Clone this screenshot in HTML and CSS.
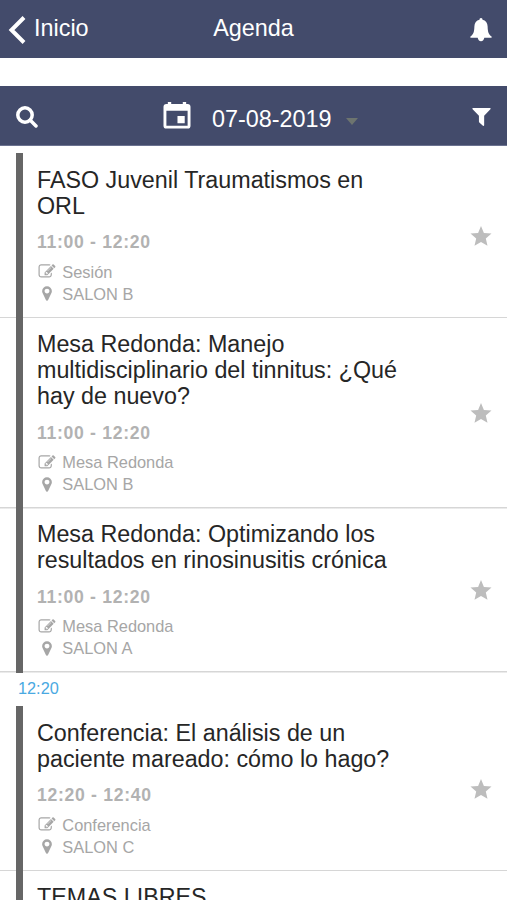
FILE: index.html
```html
<!DOCTYPE html>
<html lang="es">
<head>
  <meta charset="UTF-8" />
  <meta name="viewport" content="width=device-width, initial-scale=1.0" />
  <title>Agenda</title>
  <link rel="stylesheet" href="styles.css">
</head>
<body>
  <!-- shared icons -->
  <svg class="sprite">
    <symbol id="edit" viewBox="0 0 1792 1792"><path d="M888 1184l116-116-152-152-116 116v56h96v96h56zm440-720q-16-16-33 1l-350 350q-17 17-1 33t33-1l350-350q17-17 1-33zm80 594v190q0 119-84.500 203.500t-203.500 84.500h-832q-119 0-203.500-84.500t-84.500-203.500v-832q0-119 84.500-203.500t203.500-84.500h832q63 0 117 25 15 7 18 23 3 17-9 29l-49 49q-14 14-32 8-23-6-45-6h-832q-66 0-113 47t-47 113v832q0 66 47 113t113 47h832q66 0 113-47t47-113v-126q0-13 9-22l64-64q15-15 35-7t20 29zm-96-738l288 288-672 672h-288v-288zm444 132l-92 92-288-288 92-92q28-28 68-28t68 28l152 152q28 28 28 68t-28 68z"/></symbol>
    <symbol id="marker" viewBox="0 0 1792 1792"><path d="M1152 640q0-106-75-181t-181-75-181 75-75 181 75 181 181 75 181-75 75-181zm256 0q0 109-33 179l-364 774q-16 33-47.500 52t-67.500 19-67.500-19-46.500-52l-365-774q-33-70-33-179 0-212 150-362t362-150 362 150 150 362z"/></symbol>
    <symbol id="star" viewBox="0 0 22 22"><path d="M11 1l2.900 6.900 7.600.6-5.700 5 1.700 7.300L11 16.900l-6.500 3.900 1.700-7.300-5.700-5 7.600-.6z"/></symbol>
  </svg>

  <header class="navbar">
    <a class="back">
      <svg class="chevron" viewBox="0 0 18 28"><path d="M16 1.500L3.500 14 16 26.500"/></svg>
      <span>Inicio</span>
    </a>
    <h1>Agenda</h1>
    <svg class="bell" viewBox="0 0 22 24"><path d="M11 0c-1.100 0-1.500.8-1.500 1.800C6.300 2.500 4.500 5 4.400 8.300 4.200 14 3.500 16.200.4 18.600v1.200h7.300c.3 1.900 1.500 3.400 3.300 3.400s3-1.500 3.300-3.400h7.300v-1.200c-3.100-2.400-3.800-4.600-4-10.300-.1-3.300-1.900-5.800-5.100-6.500C12.500.8 12.100 0 11 0z"/></svg>
  </header>

  <div class="toolbar">
    <svg class="search" viewBox="0 0 22 22"><circle cx="9" cy="9" r="7.200"/><path d="M14.300 14.300L20 20"/></svg>
    <div class="date">
      <svg class="calendar" viewBox="0 0 28 28"><path fill-rule="evenodd" d="M4.500 0h3.500v2h12V0h3.500v2H25a3 3 0 0 1 3 3v19.500a3 3 0 0 1-3 3H3a3 3 0 0 1-3-3V5a3 3 0 0 1 3-3h1.500zM3 9v15.500h22V9zM14.500 14.500H22V22h-7.500z"/></svg>
      <span>07-08-2019</span>
      <i class="caret"></i>
    </div>
    <svg class="filter" viewBox="0 0 20 20"><path d="M1 .5h18q1 .3.600 1.200L12.800 8.700v10q-.3 1-1.300.5L7.700 15.800q-.4-.4-.4-1V8.700L.4 1.700Q0 .8 1 .5z"/></svg>
  </div>

  <main class="agenda">
    <section class="group">
      <article class="event">
        <div class="info">
          <h2>FASO Juvenil Traumatismos en ORL</h2>
          <p class="time">11:00 - 12:20</p>
          <p class="meta"><svg><use href="#edit"/></svg>Sesión</p>
          <p class="meta"><svg><use href="#marker"/></svg>SALON B</p>
        </div>
        <svg class="star"><use href="#star"/></svg>
      </article>
      <article class="event">
        <div class="info">
          <h2>Mesa Redonda: Manejo multidisciplinario del tinnitus: ¿Qué hay de nuevo?</h2>
          <p class="time">11:00 - 12:20</p>
          <p class="meta"><svg><use href="#edit"/></svg>Mesa Redonda</p>
          <p class="meta"><svg><use href="#marker"/></svg>SALON B</p>
        </div>
        <svg class="star"><use href="#star"/></svg>
      </article>
      <article class="event">
        <div class="info">
          <h2>Mesa Redonda: Optimizando los resultados en rinosinusitis crónica</h2>
          <p class="time">11:00 - 12:20</p>
          <p class="meta"><svg><use href="#edit"/></svg>Mesa Redonda</p>
          <p class="meta"><svg><use href="#marker"/></svg>SALON A</p>
        </div>
        <svg class="star"><use href="#star"/></svg>
      </article>
    </section>

    <h3 class="hour">12:20</h3>

    <section class="group">
      <article class="event">
        <div class="info">
          <h2>Conferencia: El análisis de un paciente mareado: cómo lo hago?</h2>
          <p class="time">12:20 - 12:40</p>
          <p class="meta"><svg><use href="#edit"/></svg>Conferencia</p>
          <p class="meta"><svg><use href="#marker"/></svg>SALON C</p>
        </div>
        <svg class="star"><use href="#star"/></svg>
      </article>
      <article class="event">
        <div class="info">
          <h2>TEMAS LIBRES</h2>
        </div>
      </article>
    </section>
  </main>
</body>
</html>
```
FILE: styles.css
```css
* { box-sizing: border-box; margin: 0; padding: 0; }
body { height: 900px; overflow: hidden; background: #fff; color: #262626; font-family: "Liberation Sans", Arial, sans-serif; }
svg { display: block; flex: none; fill: currentColor; }
.sprite { display: none; }

.navbar, .toolbar { display: grid; grid-template-columns: 1fr auto 1fr; align-items: center; background: #434b6b; color: #fff; font-size: 23.400px; }
.navbar { height: 58px; padding: 0 15px 2px 8px; }
.navbar h1 { font-size: 23.400px; font-weight: normal; margin-left: 7px; }
.back { display: flex; align-items: center; gap: 8px; }
.chevron { width: 18px; height: 28px; margin-top: 3px; fill: none; stroke: #fff; stroke-width: 4; }
.bell { width: 22px; height: 24px; margin-top: 3px; justify-self: end; }

.toolbar { height: 60px; margin-top: 28px; padding: 0 16px; border-bottom: 1px solid #6b7290; }
.search { width: 22px; height: 22px; margin-top: 3px; fill: none; stroke: #fff; stroke-width: 3.5; stroke-linecap: round; }
.date { display: flex; align-items: center; margin-left: 14px; padding-top: 7px; }
.calendar { width: 28px; height: 27px; margin: -7px 20.500px 0 0; }
.caret { margin: 4px 0 0 14px; border: 6px solid transparent; border-top: 7px solid #6d746f; border-bottom: 0; }
.filter { width: 19px; height: 20px; margin-top: 3px; justify-self: end; }

.agenda { padding-top: 7px; }
/* bar runs the whole group, separators stop at it */
.group { padding-top: 1px; background: linear-gradient(#666, #666) 16px 0 / 7px 100% no-repeat; }
.event {
  display: flex; align-items: center; justify-content: space-between;
  padding: 12.900px 15.500px 13.400px 37px;
  background:
    linear-gradient(#666, #666) 16px 0 / 7px 100% no-repeat,
    linear-gradient(#d6d6d6, #d6d6d6) 0 100% / 100% 1.500px no-repeat;
}
.info { width: 375px; }
.info h2 { font-size: 23.300px; font-weight: normal; line-height: 26px; }
.time { margin: 12.500px 0 7.500px; color: #b2b2b2; font-size: 17.600px; font-weight: bold; line-height: 22px; letter-spacing: .7px; }
.meta { display: flex; align-items: center; color: #a6a6a6; font-size: 16.400px; line-height: 22px; }
.meta svg { width: 18px; height: 17px; margin: 0 6.800px 0 .5px; }
.star { width: 22px; height: 22px; color: #bdbdbd; }
.hour { height: 33px; padding-left: 18px; color: #4aa9e2; font-size: 16.300px; font-weight: normal; line-height: 31px; }
```
